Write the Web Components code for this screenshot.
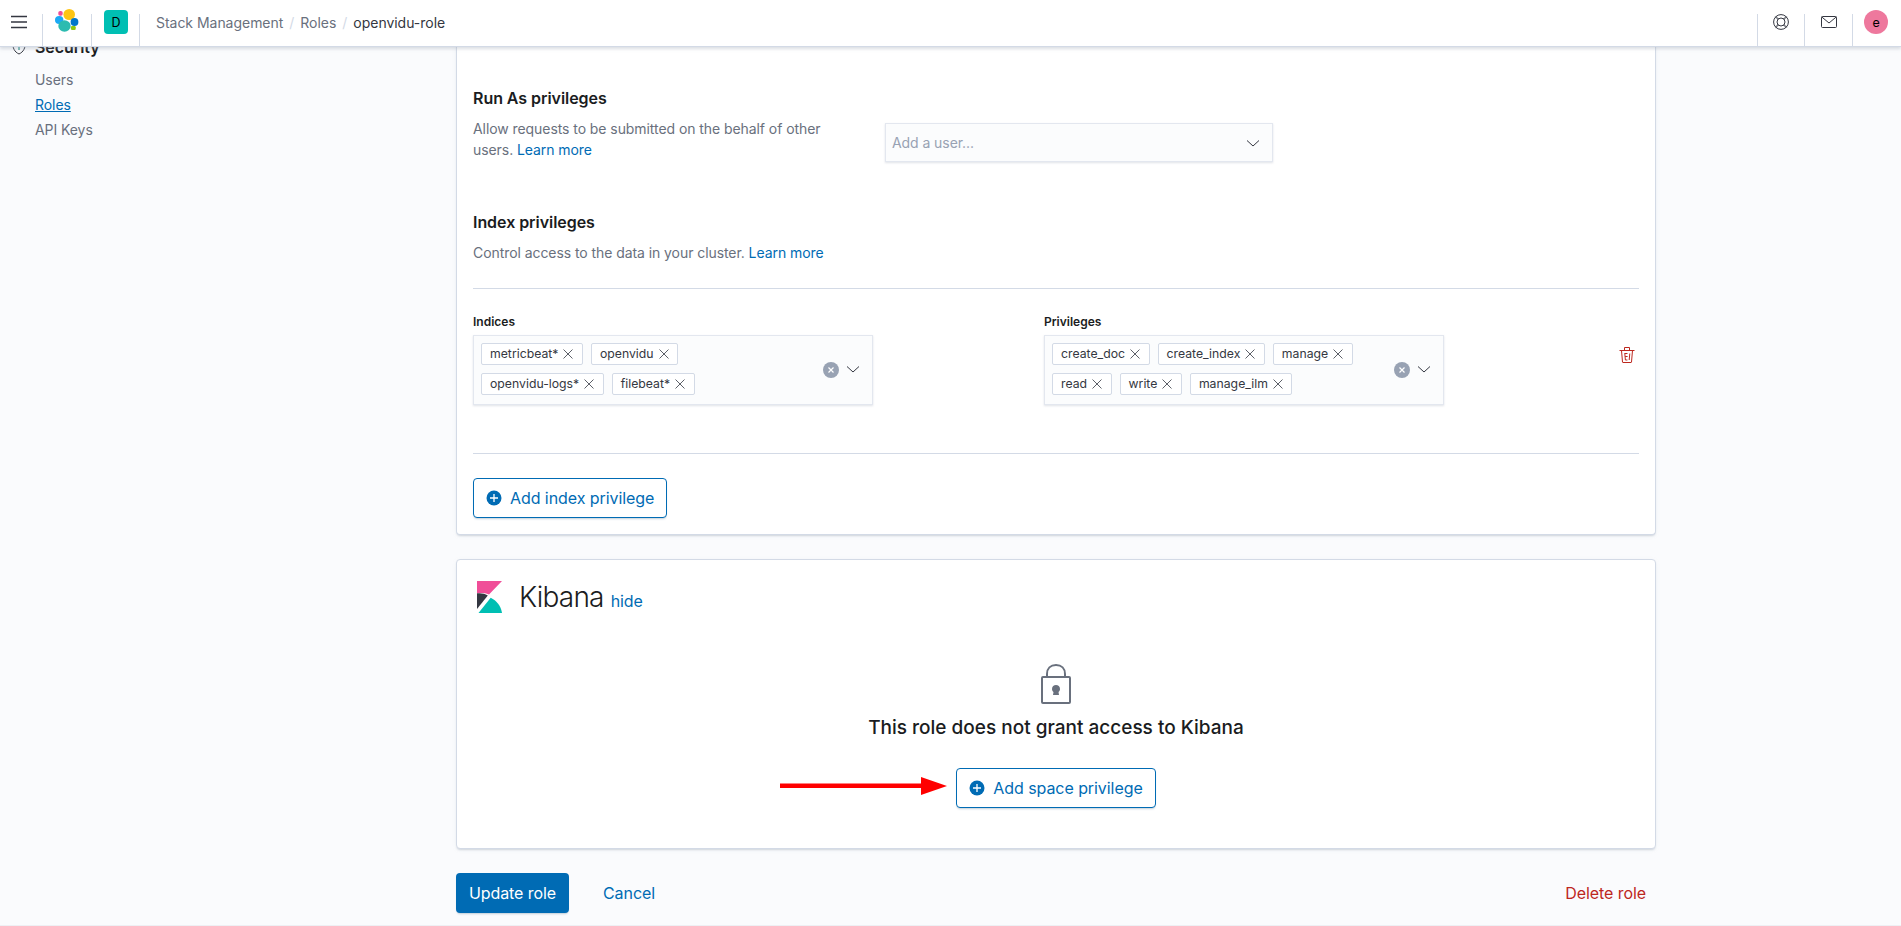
<!DOCTYPE html>
<html lang="en"><head><meta charset="utf-8"><title>Roles</title>
<style>
html,body{margin:0;padding:0;height:926px;overflow:hidden;background:#fafbfd;font-family:Inter,"Liberation Sans",sans-serif;color:#343741;font-size:14px;letter-spacing:-.07px}
</style></head><body>
<kbn-app></kbn-app>
<script>
const chev='<svg width="16" height="16" viewBox="0 0 16 16" style="display:block"><path d="M2 5.500l6 5.500 6-5.500" fill="none" stroke="#343741" stroke-width="1"/></svg>';
function def(name,html){customElements.define(name,class extends HTMLElement{constructor(){super();this.attachShadow({mode:'open'}).innerHTML=html;}})}

def('kbn-pill',`<style>:host{display:inline-flex;align-items:center;box-sizing:border-box;height:22px;background:#fff;border:1px solid #d3dae6;border-radius:2px;padding:0 7.500px 0 8px;font-size:12.250px;letter-spacing:0;line-height:20px;color:#343741;gap:4px;white-space:nowrap}
svg{display:block;flex:none}</style><slot></slot><svg width="12" height="12" viewBox="0 0 12 12"><path d="M1.500 1.500l9 9M10.500 1.500l-9 9" fill="none" stroke="#343741" stroke-width=".8"/></svg>`);

def('kbn-combo',`<style>:host{display:flex;box-sizing:border-box;width:400px;height:70px;background:#fbfcfd;box-shadow:inset 0 0 0 1px #e3e7ef,0 1px 2px rgba(152,162,179,.3);padding:8px 12px 0 8px}
.p{flex:1;display:flex;flex-direction:column;gap:8px}
::slotted(div){display:flex;gap:8px}
.c{width:16px;height:16px;border-radius:50%;background:#98a2b3;display:flex;align-items:center;justify-content:center;margin:19px 6px 0 0}
.a{margin-top:18px;height:16px}</style>
<div class="p"><slot></slot></div><div class="c"><svg width="8" height="8" viewBox="0 0 8 8"><path d="M1.500 1.500l5 5M6.500 1.500l-5 5" stroke="#fff" stroke-width="1.200"/></svg></div><div class="a">${chev}</div>`);

def('kbn-add-btn',`<style>:host{display:inline-flex;box-sizing:border-box;height:40px;border:1px solid #006bb4;border-radius:4px;background:#fff;align-items:center;color:#006bb4;font-size:16px;padding:0 12px 0 12px;gap:8px;box-shadow:0 2px 2px -1px rgba(54,97,126,.3);white-space:nowrap}
svg{display:block;flex:none}</style>
<svg width="16" height="16" viewBox="0 0 16 16"><circle cx="8" cy="8" r="7.500" fill="#006bb4"/><path d="M8 4v8M4 8h8" stroke="#fff" stroke-width="1.300"/></svg><slot></slot>`);

def('kbn-header',`<style>:host{display:flex;position:absolute;left:0;top:0;width:1901px;height:47px;box-sizing:border-box;background:#fff;border-bottom:1px solid #d3dae6;box-shadow:0 2px 3px rgba(152,162,179,.35);z-index:5;align-items:stretch;font-size:14px}
.cell{display:flex;align-items:center;justify-content:center;position:relative;padding-bottom:2px;box-sizing:border-box}
.sep::after,.sepl::before{content:"";position:absolute;right:0;top:14px;bottom:0;width:1px;background:#d3dae6}
.sepl::before{right:auto;left:0}
.sp{flex:1}
.crumbs{display:flex;align-items:center;padding:0 0 2px 16px;gap:6px;color:#69707d;white-space:nowrap;letter-spacing:-.03px}
.crumbs b{font-weight:400;color:#343741}.crumbs i{font-style:normal;color:#d3dae6}
.av,.d{width:24px;height:24px;color:#000;display:flex;align-items:center;justify-content:center;font-size:12.500px}
.av{border-radius:50%;background:#ee789d}
.d{border-radius:4px;background:#00bfb3}
svg{display:block}</style>
<div class="cell sep" style="width:43px;padding-right:5px"><svg width="16" height="16" viewBox="0 0 16 16"><path d="M0 2.500h16M0 8h16M0 13.500h16" stroke="#343741" stroke-width="1.700"/></svg></div>
<div class="cell sep" style="width:49px;padding:0 1px 5px 0"><svg width="24" height="23" viewBox="0 0 24 23">
<rect x="3.300" y="2" width="4.400" height="4.700" rx="1.800" fill="#f04e98"/>
<ellipse cx="14.200" cy="5.500" rx="5.800" ry="5.500" fill="#fec514"/>
<ellipse cx="4.200" cy="11" rx="4.200" ry="4" fill="#1ba9f5"/>
<ellipse cx="19.500" cy="13" rx="3.900" ry="4" fill="#07c"/>
<ellipse cx="9.500" cy="17" rx="6.200" ry="5.700" fill="#2cbbb0"/>
<rect x="15.900" y="16.900" width="4.800" height="4.200" rx="1.300" fill="#93c90e"/></svg></div>
<div class="cell sep" style="width:48px"><div class="d">D</div></div>
<div class="crumbs"><span>Stack Management</span><i>/</i><span>Roles</span><i>/</i><b>openvidu-role</b></div>
<div class="sp"></div>
<div class="cell sep sepl" style="width:48px"><svg width="16" height="16" viewBox="0 0 16 16" fill="none" stroke="#343741"><circle cx="8" cy="8" r="7.400"/><circle cx="8" cy="8" r="4"/><path d="M2.800 2.300l2.700 2.700M13.200 2.300l-2.700 2.700M2.800 13.700l2.700-2.700M13.200 13.700l-2.700-2.700M2.300 2.800l2.700 2.700M13.700 2.800l-2.700 2.700M2.300 13.200l2.700-2.700M13.700 13.200l-2.700-2.700" stroke-width=".8"/></svg></div>
<div class="cell sep" style="width:48px"><svg width="16" height="12" viewBox="0 0 16 12" fill="none" stroke="#343741"><rect x=".5" y=".5" width="15" height="11" rx="1"/><path d="M.8 1l7.200 6 7.200-6"/></svg></div>
<div class="cell" style="width:48px;padding-right:2px"><div class="av">e</div></div>`);

def('kbn-sidenav',`<style>:host{display:block;box-sizing:border-box;padding:37px 0 0 11px;font-size:14px;color:#69707d}
.h{display:flex;align-items:center;gap:8px;font-size:16px;font-weight:600;color:#1a1c21;height:20px;margin-bottom:10px}
.l{padding-left:24px;height:25px;line-height:25px}a{color:#006bb4}
svg{display:block}</style>
<div class="h"><svg width="16" height="16" viewBox="0 0 16 16" fill="none" stroke="#343741"><path d="M8 1c2 1.300 4 1.800 6.300 1.800C14.500 9 12.500 13 8 15 3.500 13 1.500 9 1.700 2.800 4 2.800 6 2.300 8 1z"/><path d="M8 5v6M6 7l2-2 2 2" stroke="#017d73"/></svg><span>Security</span></div>
<div class="l">Users</div><div class="l"><a href="#">Roles</a></div><div class="l">API Keys</div>`);

def('kbn-panel',`<style>:host{display:block;box-sizing:border-box;background:#fff;border:1px solid #d3dae6;border-radius:4px;box-shadow:0 2px 2px -1px rgba(152,162,179,.35),0 1px 5px -2px rgba(152,162,179,.35)}</style><slot></slot>`);

def('kbn-app',`<style>:host{display:flex;height:926px;box-sizing:border-box;border-bottom:1px solid #eef0f4;position:relative;overflow:hidden}
kbn-sidenav{width:456px;flex:none}
main{width:1200px;flex:none;display:flex;flex-direction:column}
.p1{height:535px;border-top:0;border-radius:0 0 4px 4px;padding:86px 16px 0}
.row1{display:flex;height:84px}
.row1 .t{width:412px}
.sel{width:388px;height:39px;box-sizing:border-box;margin-top:37px;background:#fbfcfd;box-shadow:inset 0 0 0 1px #e3e7ef,0 1px 2px rgba(152,162,179,.3);display:flex;align-items:center;justify-content:space-between;padding:0 12px 0 7px;color:#98a2b3;font-size:14px}
h3{margin:0;font-size:16px;line-height:24px;font-weight:600;color:#1a1c21;letter-spacing:-.05px}
p{margin:8px 0 0;line-height:21px;color:#69707d}
a{color:#006bb4;text-decoration:none}
.h2{margin-top:40px}
hr{border:0;height:1px;background:#d3dae6;margin:0}
.lab{font-size:12px;font-weight:600;line-height:16px;color:#1a1c21;margin-bottom:5px;letter-spacing:0}
.grid{display:flex;margin-top:25px;height:139px;position:relative}
.col1{width:571px}
.trash{position:absolute;left:1146px;top:33px}
.btnrow{margin-top:24px}
.p2{height:290px;margin-top:24px;padding:21px 16px 0;position:relative}
.kib{display:flex;align-items:flex-end;gap:7px;height:32px;margin-left:4px}
.kib svg{display:block;margin-right:10px}
.kib .n{font-size:28px;font-weight:300;line-height:36px;color:#1a1c21;letter-spacing:-.8px;margin-bottom:-2px}
.kib a{font-size:16px;line-height:20px;margin-bottom:2px}
.empty{display:flex;flex-direction:column;align-items:center;margin-top:51px}
.empty svg{display:block}
.msg{font-size:19px;font-weight:500;line-height:24px;color:#1a1c21;margin-top:12px;white-space:nowrap;letter-spacing:0}
.empty kbn-add-btn{margin-top:28px}
.arrow{position:absolute;left:323px;top:217px;display:block}
.foot{display:flex;align-items:center;justify-content:space-between;margin-top:24px;padding-right:10px;font-size:16px}
.upd{display:flex;align-items:center;justify-content:center;box-sizing:border-box;width:113px;height:40px;border-radius:4px;background:#006bb4;color:#fff;box-shadow:0 2px 2px -1px rgba(54,97,126,.3)}
.fl{display:flex;align-items:center;gap:34px}
</style>
<kbn-header></kbn-header>
<kbn-sidenav></kbn-sidenav>
<main>
<kbn-panel class="p1">
 <div class="row1"><div class="t"><h3>Run As privileges</h3><p>Allow requests to be submitted on the behalf of other<br>users. <a href="#">Learn more</a></p></div>
 <div class="sel"><span>Add a user...</span>${chev}</div></div>
 <div class="h2"><h3>Index privileges</h3><p>Control access to the data in your cluster. <a href="#">Learn more</a></p></div>
 <hr style="margin-top:25px">
 <div class="grid">
  <div class="col1"><div class="lab">Indices</div>
   <kbn-combo><div><kbn-pill>metricbeat*</kbn-pill><kbn-pill>openvidu</kbn-pill></div><div><kbn-pill>openvidu-logs*</kbn-pill><kbn-pill>filebeat*</kbn-pill></div></kbn-combo></div>
  <div><div class="lab">Privileges</div>
   <kbn-combo><div><kbn-pill>create_doc</kbn-pill><kbn-pill>create_index</kbn-pill><kbn-pill>manage</kbn-pill></div><div><kbn-pill>read</kbn-pill><kbn-pill>write</kbn-pill><kbn-pill>manage_ilm</kbn-pill></div></kbn-combo></div>
  <svg class="trash" width="16" height="16" viewBox="0 0 16 16" fill="none" stroke="#bd271e"><path d="M.5 3.500h15M5.500 3.500V.5h5v3"/><path d="M2.500 3.500l1 11.500c0 .3.200.5.500.5h8c.3 0 .5-.2.500-.5l1-11.500"/><path d="M5.500 6.500h3M5.800 6.500l.6 6.500h2M6.100 9.500h2.500M10.800 6.500l-.6 6.500"/></svg>
 </div>
 <hr>
 <div class="btnrow"><kbn-add-btn>Add index privilege</kbn-add-btn></div>
</kbn-panel>
<kbn-panel class="p2">
 <div class="kib"><svg width="25" height="32" viewBox="0 0 25 32"><path d="M0 0h25L12 13.500C8 12 4 11.800 0 12.300z" fill="#f04e98"/><path d="M0 12.300c4-.4 7.500 0 10.800 2.300L0 28z" fill="#343741"/><path d="M1.500 32L13.700 16.700C19.500 19.500 24 25 25 32z" fill="#00bfb3"/></svg><span class="n">Kibana</span><a href="#">hide</a></div>
 <div class="empty">
  <svg width="32" height="40" viewBox="0 0 32 40" fill="none" stroke="#69707d" stroke-width="2"><rect x="2" y="13" width="28" height="26" rx="1"/><path d="M7 13V10C7 4.500 10.500 1 16 1s9 3.500 9 9v3"/><path d="M12 25c0-2.500 1.800-4 4-4s4 1.500 4 4c0 1.300-.7 2.300-1.500 3l.5 3h-6l.5-3c-.8-.7-1.500-1.700-1.500-3z" fill="#69707d" stroke="none"/></svg>
  <div class="msg">This role does not grant access to Kibana</div>
  <kbn-add-btn>Add space privilege</kbn-add-btn>
 </div>
 <svg class="arrow" width="168" height="18" viewBox="0 0 168 18"><path d="M0 6.500h141V0l26 9-26 9v-7H0z" fill="#f00"/></svg>
</kbn-panel>
<div class="foot"><div class="fl"><div class="upd">Update role</div><a href="#">Cancel</a></div><a href="#" style="color:#bd271e">Delete role</a></div>
</main>`);
</script>
</body></html>
